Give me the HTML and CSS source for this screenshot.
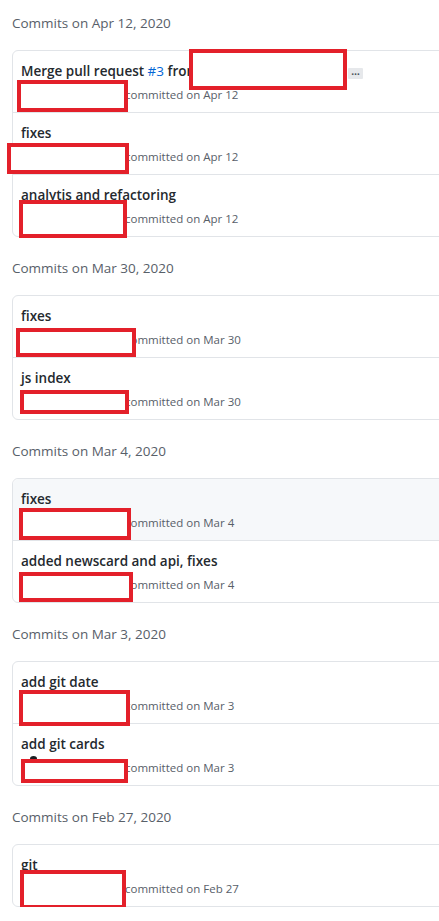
FILE: index.html
```html
<!DOCTYPE html>
<html lang="en">
<head>
<meta charset="utf-8">
<title>Commits</title>
<link rel="stylesheet" href="styles.css">
</head>
<body>
<main class="timeline">

  <section class="group">
    <h2 class="group-title">Commits on Apr 12, 2020</h2>
    <ol class="card">
      <li class="commit">
        <p class="commit-title">Merge pull request <a class="issue" href="#">#3</a> from <span class="branch">user/branch</span><span class="ellipsis">…</span></p>
        <p class="commit-meta"><span class="author"></span>committed on Apr 12</p>
        <span class="redact" style="left:176px;top:-2px;width:158px;height:41px"></span>
        <span class="redact" style="left:4px;top:29px;width:111px;height:32px"></span>
      </li>
      <li class="commit">
        <p class="commit-title">fixes</p>
        <p class="commit-meta"><span class="author"></span>committed on Apr 12</p>
        <span class="redact" style="left:-6px;top:30px;width:122px;height:31px"></span>
      </li>
      <li class="commit">
        <p class="commit-title">analytis and refactoring</p>
        <p class="commit-meta"><span class="author"></span>committed on Apr 12</p>
        <span class="redact" style="left:6px;top:25px;width:108px;height:38px"></span>
      </li>
    </ol>
  </section>

  <section class="group">
    <h2 class="group-title">Commits on Mar 30, 2020</h2>
    <ol class="card">
      <li class="commit">
        <p class="commit-title">fixes</p>
        <p class="commit-meta"><span class="author"></span>committed on Mar 30</p>
        <span class="redact" style="left:3px;top:32px;width:120px;height:29px"></span>
      </li>
      <li class="commit">
        <p class="commit-title">js index</p>
        <p class="commit-meta"><span class="author"></span>committed on Mar 30</p>
        <span class="redact" style="left:7px;top:32px;width:109px;height:24px"></span>
      </li>
    </ol>
  </section>

  <section class="group">
    <h2 class="group-title">Commits on Mar 4, 2020</h2>
    <ol class="card">
      <li class="commit is-hover">
        <p class="commit-title">fixes</p>
        <p class="commit-meta"><span class="author"></span>committed on Mar 4</p>
        <span class="redact" style="left:6px;top:29px;width:112px;height:32px"></span>
      </li>
      <li class="commit">
        <p class="commit-title">added newscard and api, fixes</p>
        <p class="commit-meta"><span class="author"></span>committed on Mar 4</p>
        <span class="redact" style="left:6px;top:31px;width:114px;height:30px"></span>
      </li>
    </ol>
  </section>

  <section class="group">
    <h2 class="group-title">Commits on Mar 3, 2020</h2>
    <ol class="card">
      <li class="commit">
        <p class="commit-title">add git date</p>
        <p class="commit-meta"><span class="author"></span>committed on Mar 3</p>
        <span class="redact" style="left:6px;top:28px;width:111px;height:36px"></span>
      </li>
      <li class="commit">
        <p class="commit-title">add git cards</p>
        <p class="commit-meta"><span class="author"><span class="avatar"></span></span>committed on Mar 3</p>
        <span class="redact" style="left:8px;top:35px;width:107px;height:24px"></span>
      </li>
    </ol>
  </section>

  <section class="group">
    <h2 class="group-title">Commits on Feb 27, 2020</h2>
    <ol class="card">
      <li class="commit">
        <p class="commit-title">git</p>
        <p class="commit-meta"><span class="author"></span>committed on Feb 27</p>
        <span class="redact" style="left:7px;top:25px;width:106px;height:39px"></span>
      </li>
    </ol>
  </section>

</main>
</body>
</html>
```

FILE: styles.css
```css
html, body {
  margin: 0;
  padding: 0;
  background: #ffffff;
  overflow: hidden;
}

body {
  font-family: "Open Sans", "Noto Sans", "Liberation Sans", sans-serif;
  color: #24292e;
}

.timeline {
  display: flex;
  flex-direction: column;
  gap: 21px;
  padding: 13px 0 0 12px;
}

.group-title {
  margin: 0;
  padding: 0 0 17px 0;
  font-size: 13.5px;
  font-weight: 400;
  line-height: 20px;
  color: #586069;
}

.card {
  list-style: none;
  margin: 0;
  padding: 0;
  width: 640px;
  border: 1px solid #e1e4e8;
  border-radius: 6px;
  background: #ffffff;
}

.commit {
  position: relative;
  padding: 10px 8px 7px 8px;
  height: 44px;
}

.commit + .commit {
  border-top: 1px solid #e1e4e8;
}

.commit.is-hover {
  background: #f6f8fa;
  border-radius: 6px 6px 0 0;
}

.commit-title {
  margin: 0;
  font-size: 13.5px;
  font-weight: 600;
  line-height: 21px;
  color: #24292e;
  white-space: nowrap;
}

.issue {
  color: #0366d6;
  font-weight: 400;
  text-decoration: none;
}

.branch {
  display: inline-block;
  width: 140px;
  color: transparent;
  overflow: hidden;
  vertical-align: top;
}

.ellipsis {
  display: inline-block;
  margin-left: 5px;
  width: 15px;
  height: 11px;
  line-height: 7px;
  font-size: 10px;
  font-weight: 700;
  text-align: center;
  color: #444d56;
  background: #e6e8eb;
  border-radius: 1px;
  vertical-align: 1px;
}

.commit-meta {
  margin: 3px 0 0 0;
  font-size: 11.5px;
  line-height: 20px;
  color: #586069;
  white-space: nowrap;
}

.author {
  display: inline-block;
  width: 104px;
  height: 20px;
  vertical-align: top;
  position: relative;
}

.avatar {
  position: absolute;
  left: 9px;
  top: -2px;
  width: 7px;
  height: 5px;
  border-radius: 50%;
  background: #1b1f23;
}

.redact {
  position: absolute;
  z-index: 1;
  box-sizing: border-box;
  border: 4px solid #e3202a;
  background: #ffffff;
}
```
